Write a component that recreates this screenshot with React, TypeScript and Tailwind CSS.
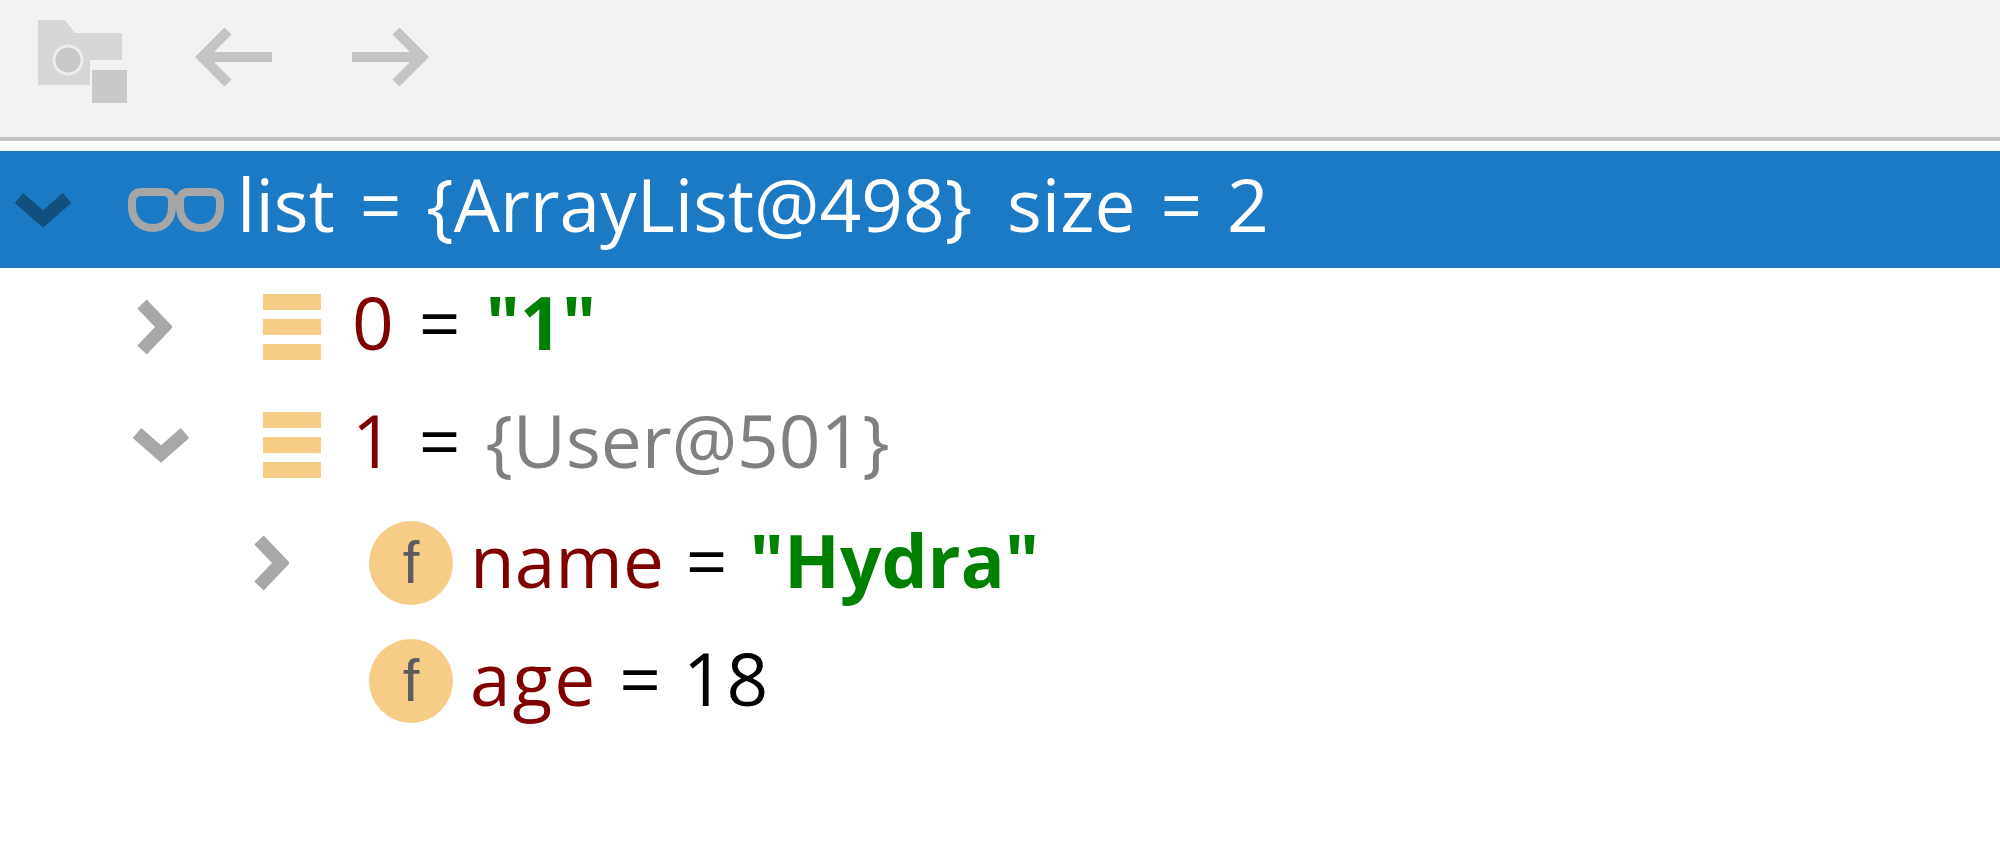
const font = "[font-family:'Open_Sans','Noto_Sans',sans-serif]"

function ChevronRight() {
  return (
    <svg width="36" height="56" viewBox="0 0 36 56" className="shrink-0">
      <path d="M6 5 L28 28 L6 51" fill="none" stroke="#a8a8a8" strokeWidth="13" />
    </svg>
  )
}

function ChevronDown({ color = '#a8a8a8' }: { color?: string }) {
  return (
    <svg width="58" height="36" viewBox="0 0 58 36" className="shrink-0">
      <path d="M5 6 L29 27 L53 6" fill="none" stroke={color} strokeWidth="13" />
    </svg>
  )
}

function Glasses() {
  return (
    <svg width="96" height="46" viewBox="0 0 96 46" className="shrink-0">
      <g fill="none" stroke="#a6a6a6" strokeWidth="8">
        <path d="M14 5 H36 C41 5 44 8 44 14 V20 C44 33 36 41 25 41 C13 41 4 33 4 20 V14 C4 8 8 5 14 5 Z" />
        <path d="M60 5 H82 C88 5 92 8 92 14 V20 C92 33 84 41 72 41 C61 41 52 33 52 20 V14 C52 8 55 5 60 5 Z" />
        <path d="M44 12 H52" />
      </g>
    </svg>
  )
}

function ListIcon() {
  return (
    <div className="flex h-[66px] w-[58px] shrink-0 flex-col justify-between">
      <div className="h-[16px] bg-[#f7cc87]" />
      <div className="h-[16px] bg-[#f7cc87]" />
      <div className="h-[16px] bg-[#f7cc87]" />
    </div>
  )
}

function FieldIcon() {
  return (
    <div className="flex h-[84px] w-[84px] shrink-0 items-center justify-center rounded-full bg-[#f7cc87]">
      <span className="font-['Liberation_Sans',sans-serif] text-[60px] leading-none text-[#5c5c5c]">f</span>
    </div>
  )
}

function Toolbar() {
  return (
    <div className="flex h-[137px] items-start bg-[#f2f2f2] pl-[38px] pt-[20px]">
      <svg width="90" height="84" viewBox="0 0 90 84" className="shrink-0">
        <path d="M0 0 H27 L37 13 H84 V40 H52 V65 H0 Z" fill="#d6d6d6" />
        <circle cx="30" cy="40" r="14" fill="#c8c8c8" stroke="#ececec" strokeWidth="3" />
        <rect x="54" y="50" width="35" height="33" fill="#c9c9c9" />
      </svg>
      <svg width="78" height="60" viewBox="0 0 78 60" className="ml-[67px] mt-[7px] shrink-0">
        <path d="M77 30 H6 M33 4 L7 30 L33 56" fill="none" stroke="#c4c4c4" strokeWidth="10" />
      </svg>
      <svg width="78" height="60" viewBox="0 0 78 60" className="ml-[78px] mt-[7px] shrink-0">
        <path d="M1 30 H72 M45 4 L71 30 L45 56" fill="none" stroke="#c4c4c4" strokeWidth="10" />
      </svg>
    </div>
  )
}

export default function App() {
  return (
    <div className={`h-[849px] w-[2000px] overflow-hidden bg-white text-[73px] leading-none [word-spacing:6px] ${font}`}>
      <Toolbar />
      <div className="h-[4px] bg-[#c4c4c4]" />
      <div className="h-[10px]" />

      <div className="flex h-[117px] items-center bg-[#1c7ac4] pl-[14px] text-white">
        <ChevronDown color="#12507f" />
        <div className="ml-[56px]">
          <Glasses />
        </div>
        <span className="mb-[12px] ml-[13px] whitespace-pre">
          list = {'{'}ArrayList@498{'}'} <span className="ml-[10px]">size = 2</span>
        </span>
      </div>

      <div className="flex h-[118px] items-center pl-[136px]">
        <ChevronRight />
        <div className="ml-[91px]">
          <ListIcon />
        </div>
        <span className="mb-[12px] ml-[31px] whitespace-pre">
          <span className="text-[#800000]">0</span> = <span className="font-bold text-[#008000]">"1"</span>
        </span>
      </div>

      <div className="flex h-[118px] items-center pl-[132px]">
        <ChevronDown />
        <div className="ml-[73px]">
          <ListIcon />
        </div>
        <span className="mb-[12px] ml-[31px] whitespace-pre">
          <span className="text-[#800000]">1</span> = <span className="text-[#808080]">{'{'}User@501{'}'}</span>
        </span>
      </div>

      <div className="flex h-[118px] items-center pl-[253px]">
        <ChevronRight />
        <div className="ml-[80px]">
          <FieldIcon />
        </div>
        <span className="mb-[8px] ml-[17px] whitespace-pre [word-spacing:3px]">
          <span className="text-[#800000]">name</span> = <span className="font-bold text-[#008000]">"Hydra"</span>
        </span>
      </div>

      <div className="flex h-[118px] items-center pl-[369px]">
        <FieldIcon />
        <span className="mb-[8px] ml-[17px] whitespace-pre [word-spacing:3px]">
          <span className="text-[#800000] tracking-[2px]">age</span> = <span className="tracking-[2px] text-black">18</span>
        </span>
      </div>
    </div>
  )
}
